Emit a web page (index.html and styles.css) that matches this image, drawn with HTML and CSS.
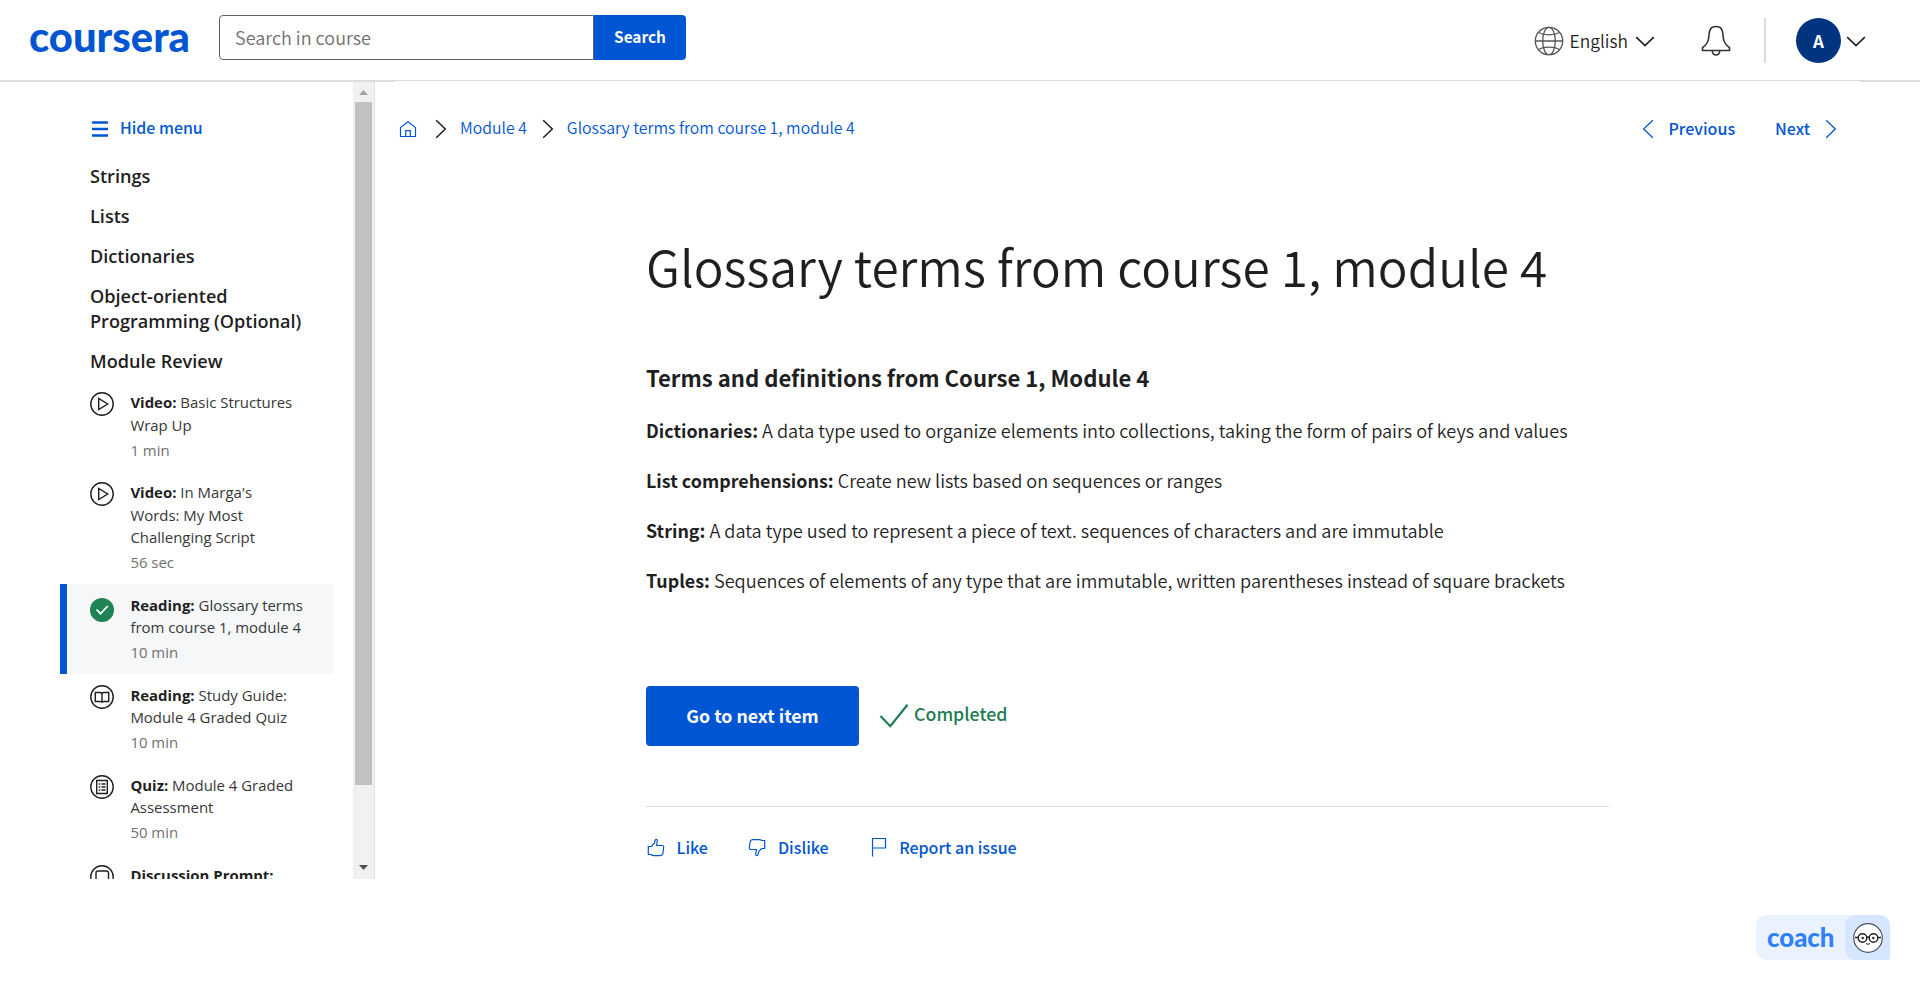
FILE: index.html
```
<!DOCTYPE html>
<html lang="en">
<head>
<meta charset="utf-8">
<title>Glossary terms from course 1, module 4 | Coursera</title>
<link rel="stylesheet" href="styles.css">
</head>
<body>
<header class="header">
  <svg class="logo" width="162" height="36" viewBox="0 0 162 36"><text class="logo-text" x="0" y="29.500" textLength="161" lengthAdjust="spacingAndGlyphs">coursera</text></svg>
  <div class="search">
    <div class="search-field">Search in course</div>
    <div class="search-button">Search</div>
  </div>
  <div class="tools">
    <svg class="globe" width="30" height="30" viewBox="0 0 30 30"><circle cx="15" cy="15" r="13.7"/><ellipse cx="15" cy="15" rx="6.3" ry="13.7"/><path d="M1.3 15h27.4M4.5 6.5c5.5 3.2 15.500 3.200 21 0M4.500 23.500c5.500-3.200 15.500-3.200 21 0"/></svg>
    <span class="lang">English</span>
    <svg class="chev" width="20" height="12" viewBox="0 0 20 12"><path d="M1.200 1.200L10 9.700L18.800 1.200"/></svg>
    <svg class="bell" width="30" height="32" viewBox="0 0 30 32"><path d="M1.500 25.500v-2.800c3.500-2.500 6-6.500 6.300-10.500C8.200 5.500 9 1.500 15 1.500s6.800 4 7.200 10.700c.3 4 2.800 8 6.300 10.500v2.800zM11.300 25.700c.3 5.700 7.100 5.700 7.400 0"/></svg>
    <span class="rule"></span>
    <span class="avatar">A</span>
    <svg class="chev" width="20" height="12" viewBox="0 0 20 12"><path d="M1.200 1.200L10 9.700L18.800 1.200"/></svg>
  </div>
</header>

<div class="body">
  <aside class="sidebar">
    <div class="menu">
      <div class="hide"><svg width="16" height="16" viewBox="0 0 16 16"><path d="M0 1.500h16M0 8h16M0 14.500h16" stroke="#0056d2" stroke-width="2.400"/></svg>Hide menu</div>
      <div class="group">Strings</div>
      <div class="group">Lists</div>
      <div class="group">Dictionaries</div>
      <div class="group">Object-oriented<br>Programming (Optional)</div>
      <div class="group">Module Review</div>
      <div class="items">
        <div class="item">
          <svg class="ico" width="24" height="24" viewBox="0 0 24 24"><circle cx="12" cy="12" r="11.200"/><path d="M8.700 6.500v11L17.700 12z"/></svg>
          <div><b>Video:</b> Basic Structures<br>Wrap Up<div class="time">1 min</div></div>
        </div>
        <div class="item">
          <svg class="ico" width="24" height="24" viewBox="0 0 24 24"><circle cx="12" cy="12" r="11.200"/><path d="M8.700 6.500v11L17.700 12z"/></svg>
          <div><b>Video:</b> In Marga's<br>Words: My Most<br>Challenging Script<div class="time">56 sec</div></div>
        </div>
        <div class="item active">
          <svg class="ico done" width="24" height="24" viewBox="0 0 24 24"><circle cx="12" cy="12" r="12"/><path d="M6.500 11.500l4 4.200L17.800 8"/></svg>
          <div><b>Reading:</b> Glossary terms<br>from course 1, module 4<div class="time">10 min</div></div>
        </div>
        <div class="item">
          <svg class="ico" width="24" height="24" viewBox="0 0 24 24"><circle cx="12" cy="12" r="11.200"/><path d="M5.300 7.500H10q2 0 2 1.500 0-1.500 2-1.500h4.700v9H14q-2 0-2 1.200 0-1.200-2-1.200H5.300zM12 9v8.500"/></svg>
          <div><b>Reading:</b> Study Guide:<br>Module 4 Graded Quiz<div class="time">10 min</div></div>
        </div>
        <div class="item">
          <svg class="ico" width="24" height="24" viewBox="0 0 24 24"><circle cx="12" cy="12" r="11.200"/><path d="M6.700 5.500h10.600v13H6.700zM8.700 9h1.600M11.500 9h4M8.700 12h1.600M11.500 12h4M8.700 15h1.600M11.500 15h4"/></svg>
          <div><b>Quiz:</b> Module 4 Graded<br>Assessment<div class="time">50 min</div></div>
        </div>
        <div class="item">
          <svg class="ico" width="24" height="24" viewBox="0 0 24 24"><circle cx="12" cy="12" r="11.200"/><rect x="6" y="6" width="12.500" height="11" rx="2"/></svg>
          <div><b>Discussion Prompt:</b></div>
        </div>
      </div>
    </div>
    <div class="track">
      <svg width="9" height="5" viewBox="0 0 9 5"><path d="M0 5L4.500 0L9 5z" fill="#a3a3a3"/></svg>
      <div class="thumb"></div>
      <svg width="9" height="5" viewBox="0 0 9 5"><path d="M0 0L4.500 5L9 0z" fill="#505050"/></svg>
    </div>
  </aside>

  <main class="main">
    <nav class="nav">
      <svg class="home" width="18" height="18" viewBox="0 0 18 18"><path d="M1.500 16.500V7.500L9 1.700l7.500 5.800v9zM6.700 16.300v-5.600h4.600v5.600"/></svg>
      <svg class="sep" width="12" height="20" viewBox="0 0 12 20"><path d="M1.200 1.200L10.300 10L1.200 18.800"/></svg>
      <span class="crumb">Module 4</span>
      <svg class="sep" width="12" height="20" viewBox="0 0 12 20"><path d="M1.200 1.200L10.300 10L1.200 18.800"/></svg>
      <span class="crumb">Glossary terms from course 1, module 4</span>
      <span class="step prev"><svg width="12" height="20" viewBox="0 0 12 20"><path d="M10.800 1.200L1.700 10L10.800 18.800"/></svg>Previous</span>
      <span class="step next">Next<svg width="12" height="20" viewBox="0 0 12 20"><path d="M1.200 1.200L10.300 10L1.200 18.800"/></svg></span>
    </nav>
    <article class="article">
      <h1>Glossary terms from course 1, module 4</h1>
      <h2>Terms and definitions from Course 1, Module 4</h2>
      <p><b>Dictionaries:</b> A data type used to organize elements into collections, taking the form of pairs of keys and values</p>
      <p><b>List comprehensions:</b> Create new lists based on sequences or ranges</p>
      <p><b>String:</b> A data type used to represent a piece of text. sequences of characters and are immutable</p>
      <p><b>Tuples:</b> Sequences of elements of any type that are immutable, written parentheses instead of square brackets</p>
      <div class="actions">
        <div class="go">Go to next item</div>
        <svg width="30" height="26" viewBox="0 0 30 26"><path d="M1.500 13L11.300 23.200L28.500 1.700" fill="none" stroke="#1d7c50" stroke-width="2.200"/></svg>
        <span class="completed">Completed</span>
      </div>
      <div class="feedback">
        <span class="fb like"><svg width="18" height="19" viewBox="0 0 18 19"><path d="M1.300 8.500H4.500L7.500 5L8 2.500Q8.300 1.200 9.300 1.300Q10.500 1.500 10.200 4L9.500 7.500H15.500Q16.800 7.700 16.700 9L15.900 15.500Q15.300 17.500 13.500 17.600H7.500Q5 17.500 4 16.500H1.300z"/></svg>Like</span>
        <span class="fb dislike"><svg width="18" height="19" viewBox="0 0 18 19"><path d="M16.700 10.500H13.500L10.700 13.500L10 16.500Q9.800 17.800 8.700 17.700Q7.500 17.500 7.800 15L8.500 11.500H2.500Q1.200 11.300 1.300 10L2.100 3.700Q2.700 1.700 4.500 1.600H10.500Q13 1.700 14 2.500H16.700z"/></svg>Dislike</span>
        <span class="fb report"><svg width="18" height="20" viewBox="0 0 18 20"><path d="M2.500 19.500V1.500H15.500V11H2.500"/></svg>Report an issue</span>
      </div>
    </article>
  </main>
</div>

<div class="coach">
  <svg class="coach-name" width="70" height="30" viewBox="0 0 70 30"><text class="coach-text" x="0" y="24" textLength="67.500" lengthAdjust="spacingAndGlyphs">coach</text></svg>
  <div class="face">
    <svg width="30" height="30" viewBox="0 0 30 30"><circle cx="15" cy="15" r="14.300" fill="#fff" stroke="#4a5165" stroke-width="1.200"/><g fill="none" stroke="#222" stroke-width="1.400"><circle cx="9.500" cy="15" r="4.300"/><circle cx="20.500" cy="15" r="4.300"/><path d="M2 14.500h3.200M13.700 14.300q1.300-.8 2.600 0M24.800 14.500H28"/><path d="M13 20.500q2 1.700 4 0" stroke-width="1"/></g><circle cx="9.700" cy="15" r="1.200" fill="#222"/><circle cx="20.300" cy="15" r="1.200" fill="#222"/></svg>
  </div>
</div>
</body>
</html>
```
FILE: styles.css
```
* { box-sizing: border-box; }
body {
  margin: 0;
  height: 990px;
  overflow: hidden;
  position: relative;
  background: #fff;
  color: #1f1f1f;
  font-family: "Noto Sans CJK SC", "Open Sans", sans-serif;
}
svg { display: block; flex: none; }

.header {
  position: relative;
  display: flex;
  height: 81px;
  border-bottom: 1px solid #dcdcdc;
}
/* the header line is one pixel thicker at both ends */
.header::before,
.header::after {
  content: "";
  position: absolute;
  top: 81px;
  height: 1px;
  background: #dcdcdc;
}
.header::before { left: 0; width: 395px; }
.header::after { right: 0; width: 60px; }
.logo { margin: 22px 0 0 29px; overflow: visible; }
.logo-text { font: 900 42px/1 Lato, sans-serif; fill: #0056d2; }
.search { display: flex; margin: 15px 0 0 28px; height: 45px; }
.search-field {
  width: 375px;
  padding-left: 15px;
  border: 1px solid #636363;
  border-radius: 4px 0 0 4px;
  color: #707070;
  font-size: 18px;
  font-weight: 350;
  line-height: 42px;
}
.search-button {
  width: 92px;
  background: #0056d2;
  border-radius: 0 4px 4px 0;
  color: #fff;
  font-size: 15.4px;
  font-weight: 700;
  line-height: 42px;
  text-align: center;
}
.tools { display: flex; align-items: center; height: 81px; margin-left: auto; padding-right: 54px; }
.globe { fill: none; stroke: #555; stroke-width: 1.3; }
.lang { margin: 0 7px 0 6px; font-size: 17.4px; font-weight: 350; }
.chev { fill: none; stroke: #1f1f1f; stroke-width: 1.6; margin-top: 3px; }
.bell { fill: none; stroke: #333; stroke-width: 1.6; margin-left: 46px; }
.rule { width: 2px; height: 45px; margin: 0 30px 0 33px; background: #dcdcdc; }
.avatar {
  width: 45px;
  height: 45px;
  margin-right: 5px;
  border-radius: 50%;
  background: #00347f;
  color: #fff;
  font-size: 17px;
  font-weight: 700;
  line-height: 46px;
  text-align: center;
}

.body { display: flex; height: 798px; }
.sidebar { display: flex; width: 375px; border-right: 1px solid #e0e0e0; font-family: "Open Sans", sans-serif; }
.menu { width: 353px; height: 798px; padding: 33px 20px 0 60px; overflow: hidden; }
.hide {
  display: flex;
  align-items: center;
  gap: 12px;
  height: 28px;
  margin: 0 0 22px 32px;
  color: #0056d2;
  font: 500 15.9px/28px "Noto Sans CJK SC", sans-serif;
}
.hide svg { margin-top: 2px; }
.group { margin: 0 0 15px 30px; font-size: 18.1px; font-weight: 600; line-height: 25px; white-space: nowrap; }
.items { margin-top: -8px; }
.item {
  display: flex;
  gap: 16px;
  padding: 10px 0 10px 30px;
  color: #373737;
  font-size: 14.95px;
  line-height: 22.5px;
  white-space: nowrap;
}
.item b { color: #1f1f1f; }
.active { padding-left: 23px; border-left: 7px solid #0056d2; background: #f5f7f8; }
.ico { margin-top: 1px; margin-left: 0.4px; fill: none; stroke: #1f1f1f; stroke-width: 1.4; }
.done { margin-top: 4.5px; stroke: none; fill: #1f8354; }
.done path { fill: none; stroke: #fff; stroke-width: 1.8; }
.time { margin-top: 2.5px; color: #707070; }
.track {
  display: flex;
  flex-direction: column;
  align-items: center;
  width: 21px;
  padding: 9px 0 9px;
  background: #f1f1f1;
}
.thumb { width: 17px; height: 683px; margin: 7px 0 auto; background: #c1c1c1; }

.main { flex: 1; }
.nav { display: flex; align-items: center; height: 28px; margin: 33px 0 0 24px; font-size: 15.8px; color: #0056d2; }
.home { fill: none; stroke: #0056d2; stroke-width: 1.2; margin-top: 2px; }
.sep { fill: none; stroke: #1f1f1f; stroke-width: 1.5; margin: 1px 13px 0 18px; }
.crumb { font-size: 15.83px; font-weight: 350; line-height: 28px; }
.crumb + .sep { margin: 1px 13px 0 15px; }
.step { display: flex; align-items: center; font-size: 16px; font-weight: 500; line-height: 26px; }
.step svg { fill: none; stroke: #0056d2; stroke-width: 1.3; margin-top: 2px; }
.prev { margin-left: auto; gap: 15px; }
.next { margin: 0 83px 0 40px; gap: 15px; }
.nav .step { margin-top: -1px; }

.article { width: 963px; margin: 92px 0 0 271px; }
h1 { margin: 0; font-size: 49.55px; font-weight: 350; line-height: 64px; white-space: nowrap; }
h2 { margin: 64px 0 23px; font-size: 22.1px; font-weight: 700; line-height: 30px; }
p { margin: 0 0 20px; font-size: 18.12px; font-weight: 350; line-height: 30px; white-space: nowrap; }
p b { font-size: 17.9px; font-weight: 700; }
.actions { display: flex; align-items: center; height: 60px; margin-top: 91px; }
.go {
  width: 213px;
  height: 60px;
  margin-right: 20px;
  border-radius: 4px;
  background: #0056d2;
  color: #fff;
  font-size: 17.75px;
  font-weight: 700;
  line-height: 58px;
  text-align: center;
}
.completed { margin: -7px 0 0 5px; color: #1d7c50; font-size: 17.75px; font-weight: 500; line-height: 30px; }
.feedback { display: flex; align-items: center; margin-top: 60px; padding: 27px 0 0 1px; border-top: 1px solid #dcdcdc; }
.fb { display: flex; align-items: center; gap: 11.5px; color: #0056d2; font-size: 16px; font-weight: 500; line-height: 26px; }
.fb svg { fill: none; stroke: #0056d2; stroke-width: 1.2; }
.dislike { margin-left: 40.5px; }
.report { margin-left: 41px; }

.coach {
  position: absolute;
  left: 1756px;
  top: 915px;
  display: flex;
  align-items: center;
  width: 134px;
  height: 45px;
  border-radius: 10px 10px 3px 10px;
  background: #eaf2ff;
}
.coach-name { margin-left: 10.5px; overflow: visible; }
.coach-text { font: 900 26px/1 Lato, sans-serif; fill: #2f80fa; }
.face {
  display: flex;
  align-items: center;
  justify-content: center;
  width: 45px;
  height: 45px;
  margin-left: auto;
  border-radius: 10px 10px 3px 10px;
  background: #d7e6ff;
}
```
